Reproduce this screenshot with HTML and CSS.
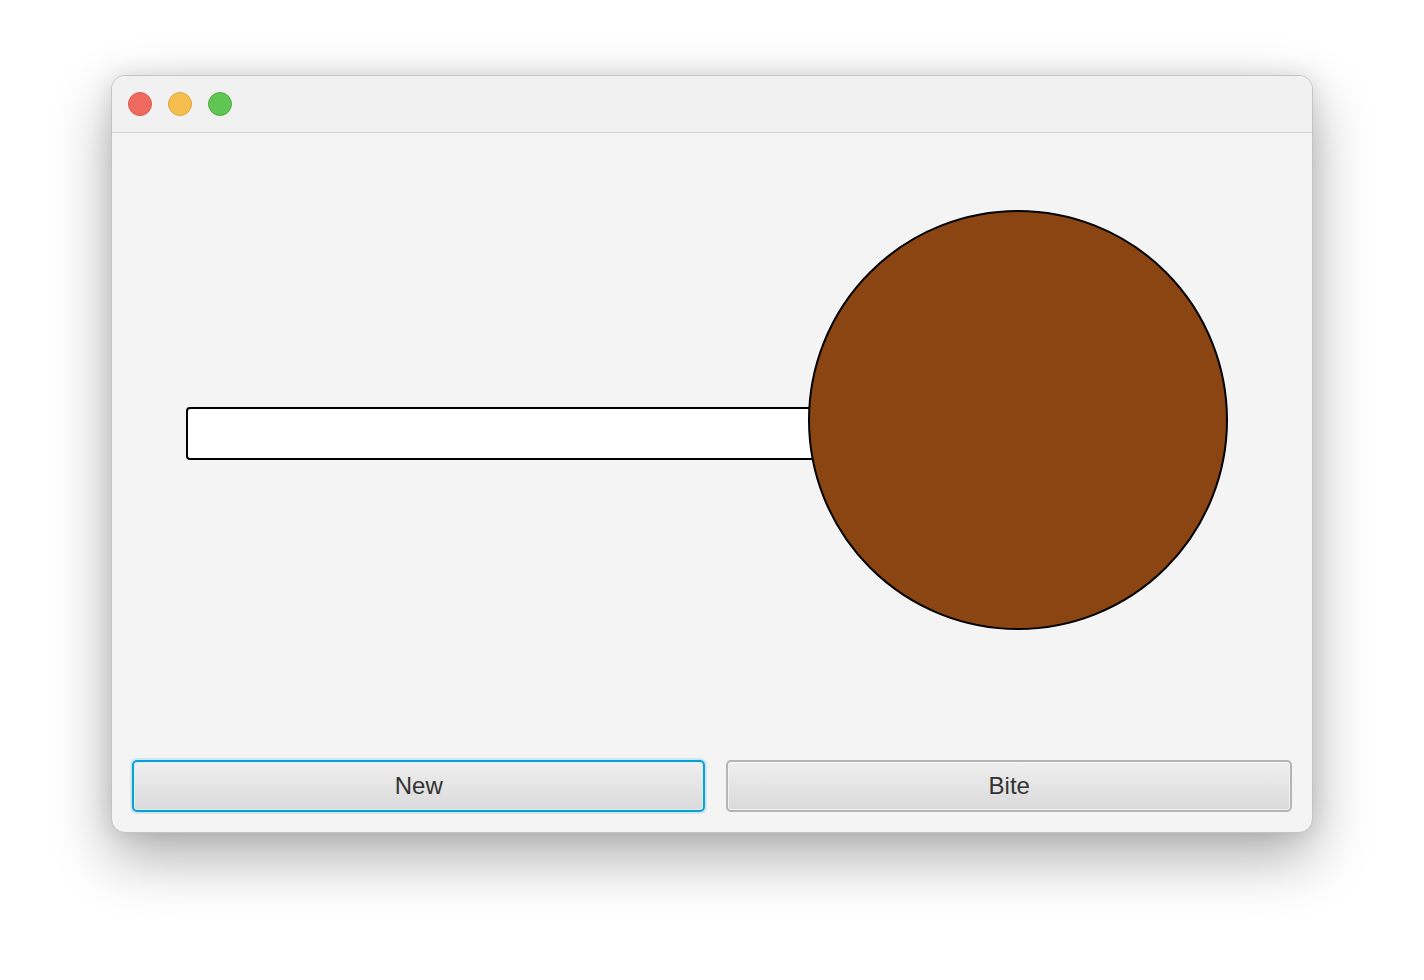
FILE: index.html
```html
<!DOCTYPE html>
<html>
<head>
<meta charset="utf-8">
<link rel="stylesheet" href="styles.css">
</head>
<body>
<div class="window">
  <div class="titlebar">
    <span class="light red"></span>
    <span class="light yellow"></span>
    <span class="light green"></span>
  </div>
  <div class="content">
    <div class="canvas">
      <div class="stick"></div>
      <div class="candy"></div>
    </div>
    <div class="buttons">
      <button class="btn focused">New</button>
      <button class="btn">Bite</button>
    </div>
  </div>
</div>
</body>
</html>
```
FILE: styles.css
```css
html, body {
  margin: 0;
  padding: 0;
  background: #ffffff;
  width: 1424px;
  height: 980px;
  overflow: hidden;
}
body {
  display: flex;
  justify-content: center;
  align-items: flex-start;
  padding-top: 75px;
  box-sizing: border-box;
  font-family: "Liberation Sans", Arial, sans-serif;
}
.window {
  width: 1202px;
  height: 758px;
  box-sizing: border-box;
  border: 1px solid #c4c4c4;
  border-radius: 14px;
  background: #f4f4f4;
  box-shadow: 0 24px 60px rgba(0,0,0,0.32), 0 0 22px rgba(0,0,0,0.10);
  display: flex;
  flex-direction: column;
  overflow: hidden;
}
.titlebar {
  height: 57px;
  flex: none;
  box-sizing: border-box;
  background: #f0f1f0;
  border-bottom: 1px solid #d4d4d4;
  display: flex;
  align-items: center;
  gap: 16px;
  padding-left: 16px;
  padding-bottom: 1px;
}
.light {
  width: 24px;
  height: 24px;
  border-radius: 50%;
  box-sizing: border-box;
}
.red { background: #ee6a5f; border: 1px solid #d75a50; }
.yellow { background: #f5bf4f; border: 1px solid #dca841; }
.green { background: #61c554; border: 1px solid #52ad46; }
.content {
  flex: 1;
  display: flex;
  flex-direction: column;
}
.canvas {
  flex: 1;
  position: relative;
}
.stick {
  position: absolute;
  left: 74px;
  top: 274px;
  width: 700px;
  height: 53px;
  box-sizing: border-box;
  background: #ffffff;
  border: 2px solid #000000;
  border-radius: 4px;
}
.candy {
  position: absolute;
  left: 696px;
  top: 77px;
  width: 420px;
  height: 420px;
  box-sizing: border-box;
  border-radius: 50%;
  background: #8b4513;
  border: 2px solid #000000;
}
.buttons {
  flex: none;
  display: flex;
  gap: 21px;
  padding: 0 20px 20px 20px;
}
.btn {
  height: 52px;
  box-sizing: border-box;
  border: 2px solid #b5b5b5;
  border-radius: 5px;
  background: linear-gradient(#efefef, #dadada);
  box-shadow: inset 0 1px 0 #f8f8f8, inset 0 0 0 1px #f2f2f2;
  font-family: "Liberation Sans", Arial, sans-serif;
  font-size: 24px;
  color: #333333;
  padding: 0;
}
.btn:first-child { flex: 574; }
.btn:last-child { flex: 566; }
.btn.focused {
  border: 2px solid #079fd6;
  box-shadow: 0 0 0 2px rgba(7,159,214,0.15), inset 0 0 0 1px #dbeff7;
}
```
